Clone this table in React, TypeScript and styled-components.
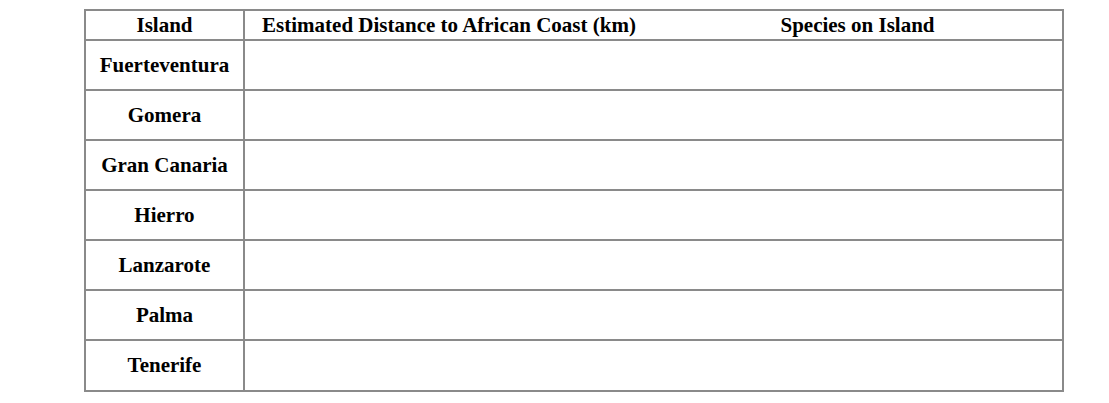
import React, { FC } from 'react'
import styled, { createGlobalStyle } from 'styled-components'

const islands = [
  'Fuerteventura',
  'Gomera',
  'Gran Canaria',
  'Hierro',
  'Lanzarote',
  'Palma',
  'Tenerife'
]

const App: FC = () => {
  return (
    <>
      <GlobalStyle />
      <Page>
        <Table>
          <colgroup>
            <col style={{ width: 159 }} />
            <col style={{ width: 409 }} />
            <col style={{ width: 410 }} />
          </colgroup>
          <thead>
            <tr>
              <HeadCell>Island</HeadCell>
              <HeadCell $open="right">Estimated Distance to African Coast (km)</HeadCell>
              <HeadCell $open="left">Species on Island</HeadCell>
            </tr>
          </thead>
          <tbody>
            {islands.map((name, i) => (
              <Row key={name} $last={i === islands.length - 1}>
                <NameCell>{name}</NameCell>
                <Cell $open="right" />
                <Cell $open="left" />
              </Row>
            ))}
          </tbody>
        </Table>
      </Page>
    </>
  )
}

export default App

const GlobalStyle = createGlobalStyle`
  html, body {
    margin: 0;
    padding: 0;
    background: #ffffff;
  }
  body {
    font-family: "Liberation Serif", "Times New Roman", serif;
    color: #000000;
  }
`

const Page = styled.div`
  width: 1109px;
  height: 403px;
  padding: 9px 0 0 84px;
  box-sizing: border-box;
`

const Table = styled.table`
  border-collapse: collapse;
  table-layout: fixed;
  width: 979px;
`

type Open = 'left' | 'right' | undefined

const HeadCell = styled.th<{ $open?: Open }>`
  height: 28px;
  padding: 0;
  border: 2px solid #8a8a8a;
  ${(p) => (p.$open === 'right' ? 'border-right: none;' : '')}
  ${(p) => (p.$open === 'left' ? 'border-left: none;' : '')}
  font-size: 21px;
  font-weight: 700;
  text-align: center;
  vertical-align: middle;
  line-height: 28px;
`

const Row = styled.tr<{ $last?: boolean }>`
  height: ${(p) => (p.$last ? 51 : 50)}px;
`

const NameCell = styled.td`
  padding: 0;
  border: 2px solid #8a8a8a;
  font-size: 21px;
  font-weight: 700;
  text-align: center;
  vertical-align: middle;
`

const Cell = styled.td<{ $open?: Open }>`
  padding: 0;
  border: 2px solid #8a8a8a;
  ${(p) => (p.$open === 'right' ? 'border-right: none;' : '')}
  ${(p) => (p.$open === 'left' ? 'border-left: none;' : '')}
`
